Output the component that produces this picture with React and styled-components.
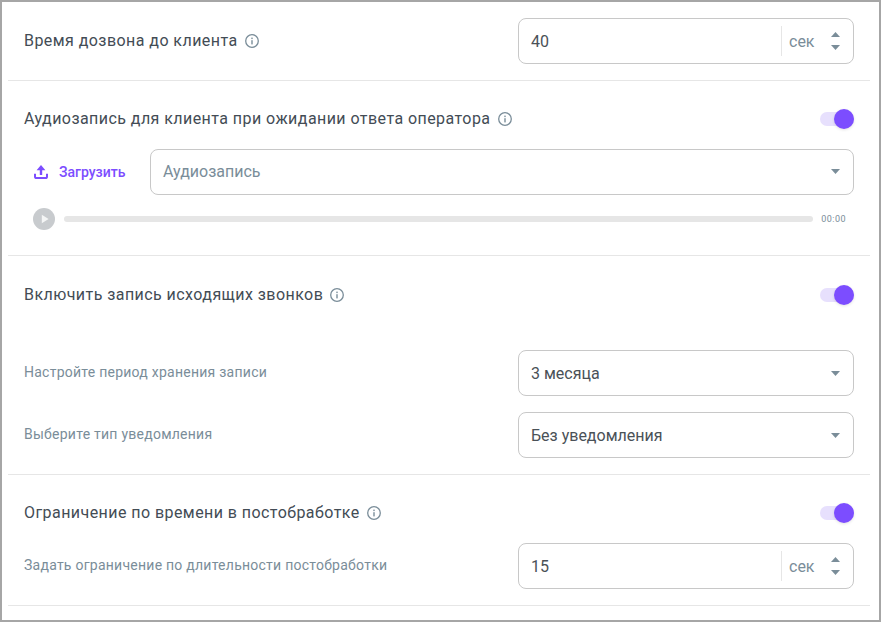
import React from 'react';
import styled, { createGlobalStyle } from 'styled-components';

const GlobalStyle = createGlobalStyle`
  html, body { margin: 0; padding: 0; background: #fff; }
  body { font-family: Roboto, "Liberation Sans", sans-serif; }
`;

const Frame = styled.div`
  box-sizing: border-box;
  width: 881px;
  height: 622px;
  border: 2px solid #a6a6a6;
  padding: 0 9px 0 6px;
  background: #fff;
  overflow: hidden;
`;

const Section = styled.section`
  box-sizing: border-box;
  height: ${props => props.height}px;
  padding: ${props => props.top}px 16px 0 16px;
  border-bottom: 1px solid #e6e6e6;
`;

const Row = styled.div`
  display: flex;
  align-items: center;
  justify-content: space-between;
  height: ${props => props.height || 46}px;
  margin-top: ${props => props.gap || 0}px;
`;

const Label = styled.div`
  display: flex;
  align-items: center;
  gap: 7px;
  margin-top: -2px;
  font-size: 16px;
  letter-spacing: 0.44px;
  color: #434c55;
`;

const SubLabel = styled.div`
  margin-top: -2px;
  font-size: 14px;
  letter-spacing: 0.25px;
  color: #7a8d99;
`;

const Field = styled.div`
  box-sizing: border-box;
  display: flex;
  align-items: center;
  flex: ${props => (props.grow ? 1 : 'none')};
  width: ${props => (props.grow ? 'auto' : '336px')};
  height: 46px;
  padding: 0 13px 0 12px;
  border: 1px solid #c8c8c8;
  border-radius: 8px;
  font-size: 16px;
  color: ${props => (props.muted ? '#7a8d99' : '#4a5157')};
  background: #fff;
`;

const FieldValue = styled.span`
  flex: 1;
`;

const Unit = styled.span`
  box-sizing: border-box;
  display: flex;
  align-items: center;
  height: 30px;
  padding-left: 7px;
  width: 50px;
  border-left: 1px solid #e6e6e6;
  color: #7a8d99;
`;

const Stepper = styled.svg`
  display: block;
  width: 9px;
  height: 18px;
`;

const Caret = styled.svg`
  display: block;
  width: 9px;
  height: 5px;
`;

const InfoSvg = styled.svg`
  display: block;
  width: 14px;
  height: 14px;
  margin-top: 2px;
  flex: none;
`;

const Switch = styled.span`
  position: relative;
  display: block;
  width: 34px;
  height: 14px;
  border-radius: 7px;
  background: #e7e0fd;
`;

const Knob = styled.span`
  position: absolute;
  top: -3px;
  right: 0;
  width: 20px;
  height: 20px;
  border-radius: 50%;
  background: #7c4dff;
  box-shadow: 0 1px 3px rgba(0, 0, 0, 0.12);
`;

const UploadRow = styled.div`
  display: flex;
  align-items: center;
  margin-top: 15.6px;
`;

const UploadButton = styled.button`
  display: flex;
  align-items: center;
  gap: 10px;
  width: 126px;
  height: 46px;
  padding: 0 0 0 9px;
  border: 0;
  background: none;
  font: 500 14px Roboto, sans-serif;
  color: #7c4dff;
`;

const Player = styled.div`
  display: flex;
  align-items: center;
  height: 24px;
  margin-top: 12.4px;
  padding: 0 8px 0 9px;
`;

const PlayButton = styled.svg`
  display: block;
  width: 22px;
  height: 22px;
  flex: none;
`;

const Track = styled.div`
  flex: 1;
  height: 6px;
  margin: 0 8px 0 9px;
  border-radius: 3px;
  background: #e6e6e6;
`;

const Time = styled.span`
  font-size: 9px;
  letter-spacing: 0.45px;
  color: #7a8d99;
`;

const Info = () => (
  <InfoSvg viewBox="0 0 14 14" fill="none">
    <circle cx="7" cy="7" r="6.3" stroke="#7a8d99" strokeWidth="1.3" />
    <rect x="6.3" y="6.2" width="1.4" height="4.2" fill="#7a8d99" />
    <rect x="6.3" y="3.6" width="1.4" height="1.5" fill="#7a8d99" />
  </InfoSvg>
);

const Toggle = () => (
  <Switch>
    <Knob />
  </Switch>
);

const NumberField = ({ value }) => (
  <Field>
    <FieldValue>{value}</FieldValue>
    <Unit>сек</Unit>
    <Stepper viewBox="0 0 9 18">
      <path d="M4.5 0 L9 5 H0 Z" fill="#7a8d99" />
      <path d="M0 13 H9 L4.5 18 Z" fill="#7a8d99" />
    </Stepper>
  </Field>
);

const SelectField = ({ value, muted, grow }) => (
  <Field muted={muted} grow={grow}>
    <FieldValue>{value}</FieldValue>
    <Caret viewBox="0 0 9 5">
      <path d="M0 0 H9 L4.5 5 Z" fill="#7a8d99" />
    </Caret>
  </Field>
);

const UploadIcon = () => (
  <svg width="16" height="16" viewBox="0 0 16 16" fill="none">
    <path d="M8 1 L12.4 6.2 H9.2 V11 H6.8 V6.2 H3.6 Z" fill="#7c4dff" />
    <path d="M2 9.8 V12.4 A1.6 1.6 0 0 0 3.6 14 H12.4 A1.6 1.6 0 0 0 14 12.4 V9.8" stroke="#7c4dff" strokeWidth="2" />
  </svg>
);

export default function App() {
  return (
    <>
      <GlobalStyle />
      <Frame>
        <Section height={79} top={16}>
          <Row>
            <Label>Время дозвона до клиента <Info /></Label>
            <NumberField value="40" />
          </Row>
        </Section>
        <Section height={175} top={24}>
          <Row height={28}>
            <Label>Аудиозапись для клиента при ожидании ответа оператора <Info /></Label>
            <Toggle />
          </Row>
          <UploadRow>
            <UploadButton><UploadIcon />Загрузить</UploadButton>
            <SelectField value="Аудиозапись" muted grow />
          </UploadRow>
          <Player>
            <PlayButton viewBox="0 0 22 22">
              <circle cx="11" cy="11" r="11" fill="#c8cbce" />
              <path d="M8.8 6.8 L15.6 11 L8.8 15.2 Z" fill="#f4f5f5" />
            </PlayButton>
            <Track />
            <Time>00:00</Time>
          </Player>
        </Section>
        <Section height={219} top={24}>
          <Row height={30}>
            <Label>Включить запись исходящих звонков <Info /></Label>
            <Toggle />
          </Row>
          <Row gap={40}>
            <SubLabel>Настройте период хранения записи</SubLabel>
            <SelectField value="3 месяца" />
          </Row>
          <Row gap={16}>
            <SubLabel>Выберите тип уведомления</SubLabel>
            <SelectField value="Без уведомления" />
          </Row>
        </Section>
        <Section height={131} top={24}>
          <Row height={28}>
            <Label>Ограничение по времени в постобработке <Info /></Label>
            <Toggle />
          </Row>
          <Row gap={16}>
            <SubLabel>Задать ограничение по длительности постобработки</SubLabel>
            <NumberField value="15" />
          </Row>
        </Section>
      </Frame>
    </>
  );
}
